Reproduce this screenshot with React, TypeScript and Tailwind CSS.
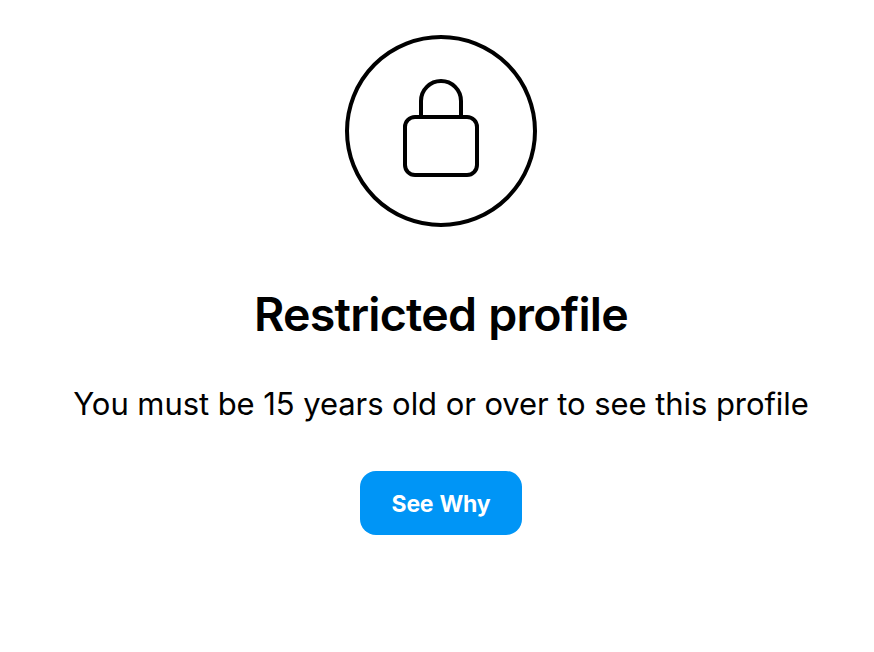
const LockIcon = () => (
  <svg
    className="h-48 w-48"
    viewBox="0 0 192 192"
    fill="none"
    stroke="#000"
    strokeWidth={4}
    aria-hidden="true"
  >
    <circle cx="96" cy="96" r="94" />
    <rect x="60" y="82" width="72" height="58" rx="10" />
    <path d="M76 82V66a20 20 0 0 1 40 0v16" />
  </svg>
);

export default function App() {
  return (
    <main className="flex h-[652px] w-[882px] flex-col items-center overflow-hidden bg-white pt-[35px] font-['Inter',sans-serif] text-black">
      <LockIcon />
      <h1 className="mt-[57px] text-[46.5px] leading-[60px] font-semibold tracking-[-0.75px] whitespace-nowrap [word-spacing:1px]">
        Restricted profile
      </h1>
      <p className="mt-10 text-[31px] leading-10 tracking-[-0.07px] whitespace-nowrap">
        You must be 15 years old or over to see this profile
      </p>
      <button
        type="button"
        className="mt-[47px] h-16 w-[162px] rounded-2xl bg-[#0095f6] pt-0.5 text-[23px] font-bold tracking-[-0.25px] text-white [word-spacing:1px]"
      >
        See Why
      </button>
    </main>
  );
}
